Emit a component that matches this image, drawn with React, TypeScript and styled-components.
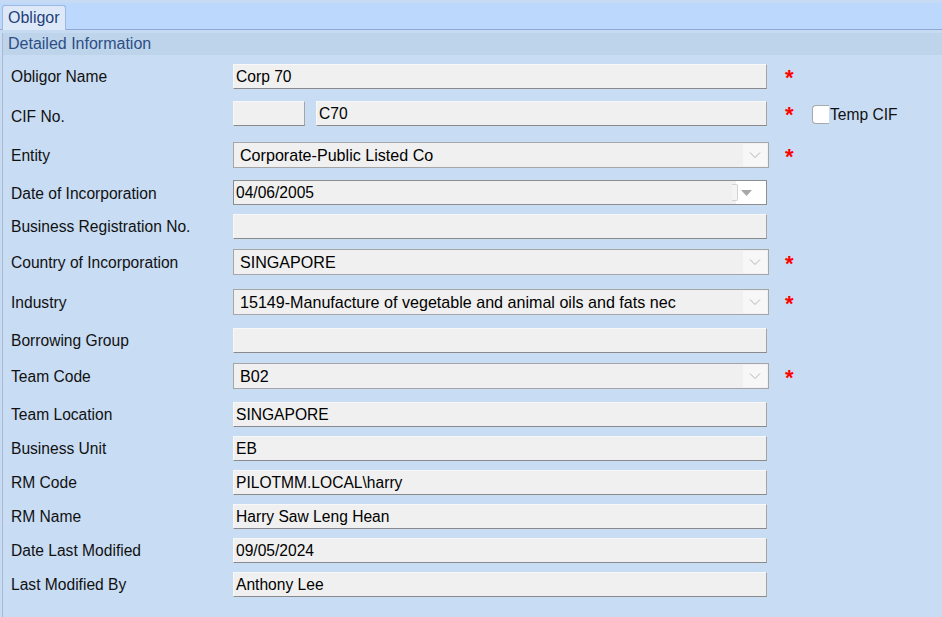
import React from "react";
import styled, { createGlobalStyle } from "styled-components";

const GlobalStyle = createGlobalStyle`
  html, body {
    margin: 0;
    padding: 0;
    background: #c8dcf4;
    font-family: "Liberation Sans", Arial, sans-serif;
  }
`;

const Page = styled.div`
  width: 942px;
  height: 617px;
  overflow: hidden;
  background: #c8dcf4;
  display: flex;
  flex-direction: column;
`;

const TopStrip = styled.div`
  height: 3px;
  background: #c6dbf3;
`;

const TabBar = styled.div`
  height: 26px;
  background: #bcd9fd;
  border-bottom: 1px solid #8fa9d4;
  display: flex;
  align-items: flex-end;
  padding-left: 2px;
`;

const Tab = styled.div`
  height: 24px;
  margin-bottom: -1px;
  padding: 0 5px;
  background: #dde9f9;
  border: 1px solid #9fb8dc;
  border-bottom: none;
  border-radius: 3px 3px 0 0;
  font-size: 16px;
  line-height: 24px;
  color: #1f3f7a;
`;

const Gap = styled.div`
  height: 3px;
  background: #c6daf2;
`;

const Panel = styled.div`
  flex: 1;
  margin-left: 2px;
  border-left: 1px solid #a8bad0;
  display: flex;
  flex-direction: column;
`;

const SectionHeader = styled.div`
  height: 22px;
  line-height: 22px;
  padding-left: 5px;
  background: #bdd4eb;
  font-size: 16px;
  color: #2d4f86;
`;

const Form = styled.div`
  display: flex;
  flex-direction: column;
  padding: 8px 0 0 8px;
`;

const Row = styled.div<{ $gap: number }>`
  display: flex;
  align-items: center;
  height: 26px;
  margin-top: ${(p) => p.$gap}px;
`;

const Label = styled.div<{ $drop?: number }>`
  width: 222px;
  font-size: 15.6px;
  color: #111;
  position: relative;
  top: ${(p) => p.$drop ?? 1}px;
`;

const FieldArea = styled.div`
  width: 536px;
  display: flex;
  gap: 11px;
`;

const TextBox = styled.div<{ $width?: number }>`
  box-sizing: border-box;
  width: ${(p) => (p.$width ? `${p.$width}px` : "534px")};
  height: 25px;
  padding-left: 2px;
  background: #f0f0f0;
  border: 1px solid;
  border-color: #f8f8f8 #a4a4a4 #8a8a8a #f8f8f8;
  font-size: 15.6px;
  line-height: 23px;
  color: #000;
  white-space: nowrap;
  overflow: hidden;
`;

const SelectBox = styled.div`
  box-sizing: border-box;
  width: 536px;
  height: 26px;
  display: flex;
  align-items: center;
  background: #f0f0f0;
  border: 1px solid #a6a6a6;
  font-size: 16.1px;
  color: #000;
`;

const SelectText = styled.div`
  flex: 1;
  padding-left: 6px;
  white-space: nowrap;
  overflow: hidden;
`;

const SelectButton = styled.div`
  width: 24px;
  height: 22px;
  margin-right: 1px;
  background: #f7f7f7;
  display: flex;
  align-items: center;
  justify-content: center;
`;

const DateBox = styled.div`
  box-sizing: border-box;
  width: 534px;
  height: 25px;
  margin-top: -1px;
  display: flex;
  align-items: stretch;
  background: #ffffff;
  border: 1px solid #8e8e8e;
  font-size: 15.6px;
  color: #000;
`;

const DateText = styled.div`
  flex: 1;
  background: #f0f0f0;
  padding-left: 2px;
  line-height: 23px;
`;

const DateTools = styled.div`
  width: 30px;
  display: flex;
  align-items: center;
  gap: 3px;
`;

const SpinEdge = styled.div`
  width: 5px;
  height: 15px;
  margin-left: -4px;
  border: 1px solid #d2d2d2;
  border-left: none;
  border-radius: 0 2px 2px 0;
  background: #f4f4f4;
`;

const Asterisk = styled.span`
  margin-left: 16px;
  width: 12px;
  font-size: 22px;
  font-weight: bold;
  color: #ff0000;
  line-height: 20px;
  height: 16px;
  font-family: "Liberation Sans", Arial, sans-serif;
`;

const CheckWrap = styled.label`
  display: flex;
  align-items: center;
  margin-left: 15px;
  margin-top: 3px;
  font-size: 15.6px;
  color: #111;
`;

const CheckBox = styled.span`
  box-sizing: border-box;
  width: 17px;
  height: 19px;
  background: #fff;
  border: 1px solid #a8a8a8;
  border-right: none;
  border-radius: 4px 0 0 4px;
  margin-right: 1px;
`;

const Chevron = () => (
  <svg width="12" height="8" viewBox="0 0 12 8">
    <path d="M1 1.5 L6 6.5 L11 1.5" fill="none" stroke="#b4b4b4" strokeWidth="1" />
  </svg>
);

const Triangle = () => (
  <svg width="11" height="6" viewBox="0 0 11 6">
    <path d="M0 0 H11 L5.5 6 Z" fill="#a8a8a8" />
  </svg>
);

type Field =
  | { kind: "text"; label: string; value: string; gap: number; req?: boolean }
  | { kind: "select"; label: string; value: string; gap: number; req?: boolean }
  | { kind: "date"; label: string; value: string; gap: number }
  | { kind: "cif"; label: string; value: string; gap: number };

const fields: Field[] = [
  { kind: "text", label: "Obligor Name", value: "Corp 70", gap: 0, req: true },
  { kind: "cif", label: "CIF No.", value: "C70", gap: 11 },
  { kind: "select", label: "Entity", value: "Corporate-Public Listed Co", gap: 16, req: true },
  { kind: "date", label: "Date of Incorporation", value: "04/06/2005", gap: 12 },
  { kind: "text", label: "Business Registration No.", value: "", gap: 7 },
  { kind: "select", label: "Country of Incorporation", value: "SINGAPORE", gap: 10, req: true },
  {
    kind: "select",
    label: "Industry",
    value: "15149-Manufacture of vegetable and animal oils and fats nec",
    gap: 14,
    req: true,
  },
  { kind: "text", label: "Borrowing Group", value: "", gap: 12 },
  { kind: "select", label: "Team Code", value: "B02", gap: 10, req: true },
  { kind: "text", label: "Team Location", value: "SINGAPORE", gap: 12 },
  { kind: "text", label: "Business Unit", value: "EB", gap: 8 },
  { kind: "text", label: "RM Code", value: "PILOTMM.LOCAL\\harry", gap: 8 },
  { kind: "text", label: "RM Name", value: "Harry Saw Leng Hean", gap: 8 },
  { kind: "text", label: "Date Last Modified", value: "09/05/2024", gap: 8 },
  { kind: "text", label: "Last Modified By", value: "Anthony Lee", gap: 8 },
];

function FieldRow({ f }: { f: Field }) {
  let control: React.ReactNode = null;
  let req = false;

  if (f.kind === "text") {
    control = <TextBox>{f.value}</TextBox>;
    req = !!f.req;
  } else if (f.kind === "select") {
    control = (
      <SelectBox>
        <SelectText>{f.value}</SelectText>
        <SelectButton>
          <Chevron />
        </SelectButton>
      </SelectBox>
    );
    req = !!f.req;
  } else if (f.kind === "date") {
    control = (
      <DateBox>
        <DateText>{f.value}</DateText>
        <DateTools>
          <SpinEdge />
          <Triangle />
        </DateTools>
      </DateBox>
    );
  } else {
    control = (
      <>
        <TextBox $width={72} />
        <TextBox $width={451}>{f.value}</TextBox>
      </>
    );
  }

  return (
    <Row $gap={f.gap}>
      <Label $drop={f.kind === "cif" ? 4 : 1}>{f.label}</Label>
      <FieldArea>{control}</FieldArea>
      {(req || f.kind === "cif") && <Asterisk>*</Asterisk>}
      {f.kind === "cif" && (
        <CheckWrap>
          <CheckBox />
          Temp CIF
        </CheckWrap>
      )}
    </Row>
  );
}

export default function App() {
  return (
    <>
      <GlobalStyle />
      <Page>
        <TopStrip />
        <TabBar>
          <Tab>Obligor</Tab>
        </TabBar>
        <Gap />
        <Panel>
          <SectionHeader>Detailed Information</SectionHeader>
          <Form>
            {fields.map((f) => (
              <FieldRow key={f.label} f={f} />
            ))}
          </Form>
        </Panel>
      </Page>
    </>
  );
}
